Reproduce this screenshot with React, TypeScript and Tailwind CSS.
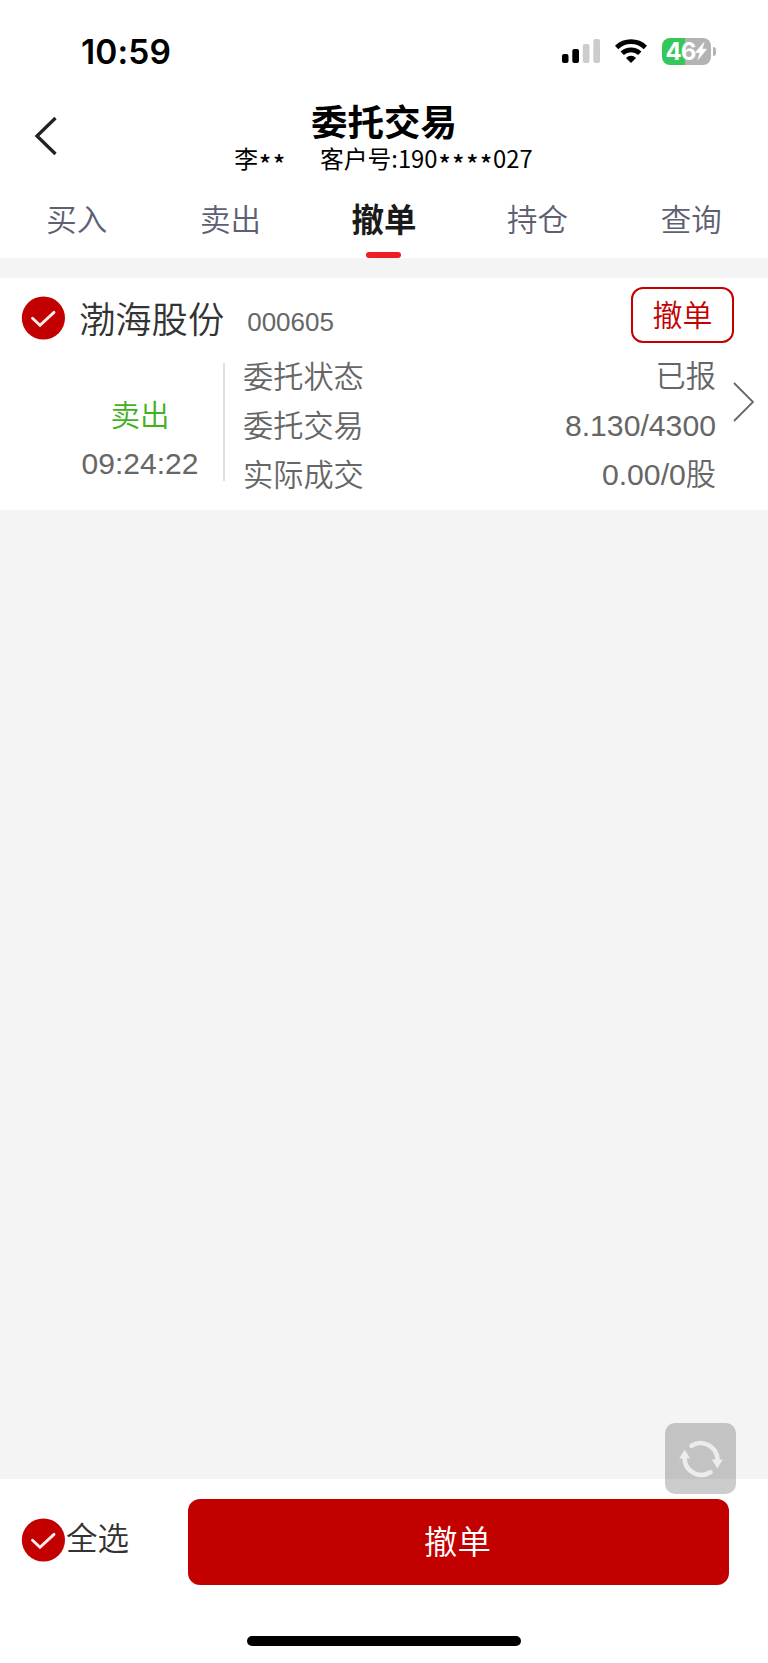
import React, { useState } from 'react';

const tabs = ['买入', '卖出', '撤单', '持仓', '查询'];

const order = {
  name: '渤海股份',
  code: '000605',
  side: '卖出',
  time: '09:24:22',
  rows: [
    { label: '委托状态', value: '已报' },
    { label: '委托交易', value: '8.130/4300' },
    { label: '实际成交', value: '0.00/0股' }
  ]
};

const CheckCircle: React.FC = () => (
  <svg viewBox="0 0 44 44" className="w-11 h-11 shrink-0" fill="none">
    <circle cx="22.4" cy="22" r="21.6" fill="#c30000" />
    <path d="M11.5 22.3L19 29.2L33 16.4" stroke="#fff" strokeOpacity="0.93" strokeWidth="2.9" strokeLinecap="round" />
  </svg>
);

const Stars: React.FC<{ count: number }> = ({ count }) => (
  <span className="inline-flex">
    {Array.from({ length: count }, (_, i) => (
      <span key={i} className="relative top-[6px] w-[13.9px] text-center text-[25px] font-medium">*</span>
    ))}
  </span>
);

const StatusBar: React.FC = () => (
  <div className="h-[92px] shrink-0 flex items-start justify-between pl-[81px] pr-[52px]">
    <span className="mt-[33px] font-['Inter'] text-[33.5px] leading-[38px] font-semibold tracking-[0.1px]">10:59</span>
    <div className="flex items-center mt-[37px] h-7">
      <svg viewBox="0 0 38 24" className="w-[38px] h-6 mr-[15px]">
        <rect x="0" y="15" width="6.5" height="9" rx="2" fill="#000" />
        <rect x="10.3" y="10" width="6.7" height="14" rx="2" fill="#000" />
        <rect x="20.8" y="5" width="6.7" height="19" rx="2" fill="#ccc" />
        <rect x="31.3" y="0" width="6.7" height="24" rx="2" fill="#ccc" />
      </svg>
      <svg viewBox="0 0 32 24" className="w-8 h-6 mr-[15px]" fill="none" stroke="#000" strokeWidth="4.8">
        <path d="M1.6 8.5A20.8 20.8 0 0 1 30.4 8.5" />
        <path d="M7.2 14.3A12.8 12.8 0 0 1 24.8 14.3" />
        <path d="M16 24L11 18.9A7.1 7.1 0 0 1 21 18.9Z" fill="#000" stroke="none" />
      </svg>
      <div className="flex items-center justify-center w-[49px] h-[27px] rounded-[8px] bg-[linear-gradient(90deg,#34c759_47%,#b3b3b3_47%)] text-white">
        <span className="font-['Inter'] text-[24px] leading-[27px] font-bold tracking-[-1px]">46</span>
        <svg viewBox="0 0 12 18" className="w-3 h-[18px] shrink-0" fill="#fff" stroke="#fff" strokeWidth="0.7" strokeLinejoin="round">
          <path d="M9 0.4L0.4 10.6H5L3 17.6L11.6 7.2H7Z" />
        </svg>
      </div>
      <span className="w-[3px] h-[9px] ml-[2px] rounded-r-full bg-[#b3b3b3]" />
    </div>
  </div>
);

const App: React.FC = () => {
  const [activeTab, setActiveTab] = useState('撤单');

  return (
    <div className="relative flex flex-col w-[768px] h-[1663px] overflow-hidden bg-white text-black font-['Noto_Sans_CJK_SC',sans-serif]">
      <StatusBar />

      {/* Header */}
      <header className="flex h-[88px] shrink-0 px-[34px]">
        <button className="w-6 h-[88px] flex items-center">
          <svg viewBox="0 0 24 40" className="w-6 h-10" fill="none" stroke="#222" strokeWidth="3.3">
            <path d="M21.5 2L3 20L21.5 38" />
          </svg>
        </button>
        <div className="flex-1 pr-6 flex flex-col items-center">
          <h1 className="mt-[9px] text-[36.5px] leading-[40px] font-bold">委托交易</h1>
          <div className="mt-[1px] -ml-px flex gap-[34px] text-[23.8px] leading-[30px] whitespace-nowrap">
            <span>李<Stars count={2} /></span>
            <span>客户号:190<Stars count={4} />027</span>
          </div>
        </div>
      </header>

      {/* Tabs */}
      <nav className="grid grid-cols-5 h-[78px] shrink-0">
        {tabs.map((tab) => (
          <button key={tab} onClick={() => setActiveTab(tab)} className="relative flex justify-center pt-[18px]">
            <span className={tab === activeTab ? 'text-[32.5px] leading-[40px] font-bold text-[#1a1a1a]' : 'text-[30.5px] leading-[40px] font-[350] text-[#5d6070]'}>
              {tab}
            </span>
            {tab === activeTab && (
              <span className="absolute bottom-0 w-[35px] h-[6px] rounded-full bg-[#ee1c25]" />
            )}
          </button>
        ))}
      </nav>

      {/* Order list */}
      <main className="flex-1 pt-5 bg-[#f4f4f4]">
        <section className="h-[232px] bg-white">
          <div className="flex h-[78px] pl-[21px] pr-[34px]">
            <div className="pt-[18px]"><CheckCircle /></div>
            <span className="ml-[14px] mt-[19px] text-[36.3px] leading-[40px] font-[350] text-[#333]">{order.name}</span>
            <span className="ml-[23px] mt-[29px] font-['Liberation_Sans'] text-[26px] leading-[30px] text-[#666]">{order.code}</span>
            <button className="ml-auto mt-[9px] w-[103px] h-[56px] pb-[4px] flex items-center justify-center rounded-[12px] border-2 border-[#c40000] text-[30px] leading-none font-[350] text-[#c40000]">
              撤单
            </button>
          </div>
          <div className="flex">
            <div className="w-[116px] ml-[82px] mr-[25px] pt-[35px] flex flex-col items-center">
              <span className="text-[29.5px] leading-[44px] font-[350] text-[#42b11f]">{order.side}</span>
              <span className="mt-[11px] font-['Liberation_Sans'] text-[30px] leading-[36px] text-[#666]">{order.time}</span>
            </div>
            <div className="w-[2px] h-[118px] mt-[7px] bg-[#e0e0e0]" />
            <div className="flex-1 pl-[18px] pr-[17px] -mt-[5px] text-[30.2px] leading-[49px] font-[350] text-[#666]">
              {order.rows.map((row) => (
                <div key={row.label} className="flex justify-between">
                  <span>{row.label}</span>
                  <span className="pt-px -mb-px font-['Liberation_Sans','Noto_Sans_CJK_SC',sans-serif]">{row.value}</span>
                </div>
              ))}
            </div>
            <svg viewBox="0 0 21 40" className="w-[21px] h-10 mr-[14px] mt-[26px]" fill="none" stroke="#666" strokeWidth="1.8">
              <path d="M1 1L20 20L1 39" />
            </svg>
          </div>
        </section>
      </main>

      {/* Bottom bar */}
      <footer className="h-[184px] shrink-0 flex flex-col items-center justify-between pt-5 pb-[17px]">
        <div className="w-full flex pl-[21px] pr-[39px]">
          <div className="pt-[19px]"><CheckCircle /></div>
          <span className="ml-[1px] mt-[17px] text-[31.5px] leading-[40px] font-[350] text-[#333]">全选</span>
          <button className="ml-auto w-[541px] h-[86px] pr-[2px] pb-[4px] rounded-[12px] bg-[#c20000] text-[33.5px] leading-none font-[350] text-white">
            撤单
          </button>
        </div>
        <div className="w-[274px] h-[10px] rounded-full bg-black" />
      </footer>

      {/* Floating refresh button */}
      <button className="absolute right-[32px] bottom-[169px] w-[71px] h-[71px] rounded-[10px] bg-black/20 flex items-center justify-center">
        <svg viewBox="0 0 44 40" className="w-11 h-10" fill="none" stroke="#ececec" strokeWidth="4.6" strokeLinecap="round">
          <path d="M12.6 6.7A17 17 0 0 1 38.5 21" />
          <path d="M31.4 33.3A17 17 0 0 1 5.5 19" />
          <path d="M32.8 20.5H43.8L38.3 29.5ZM0.2 19.5H11.2L5.7 10.5Z" fill="#ececec" stroke="none" />
        </svg>
      </button>
    </div>
  );
};

export default App;
